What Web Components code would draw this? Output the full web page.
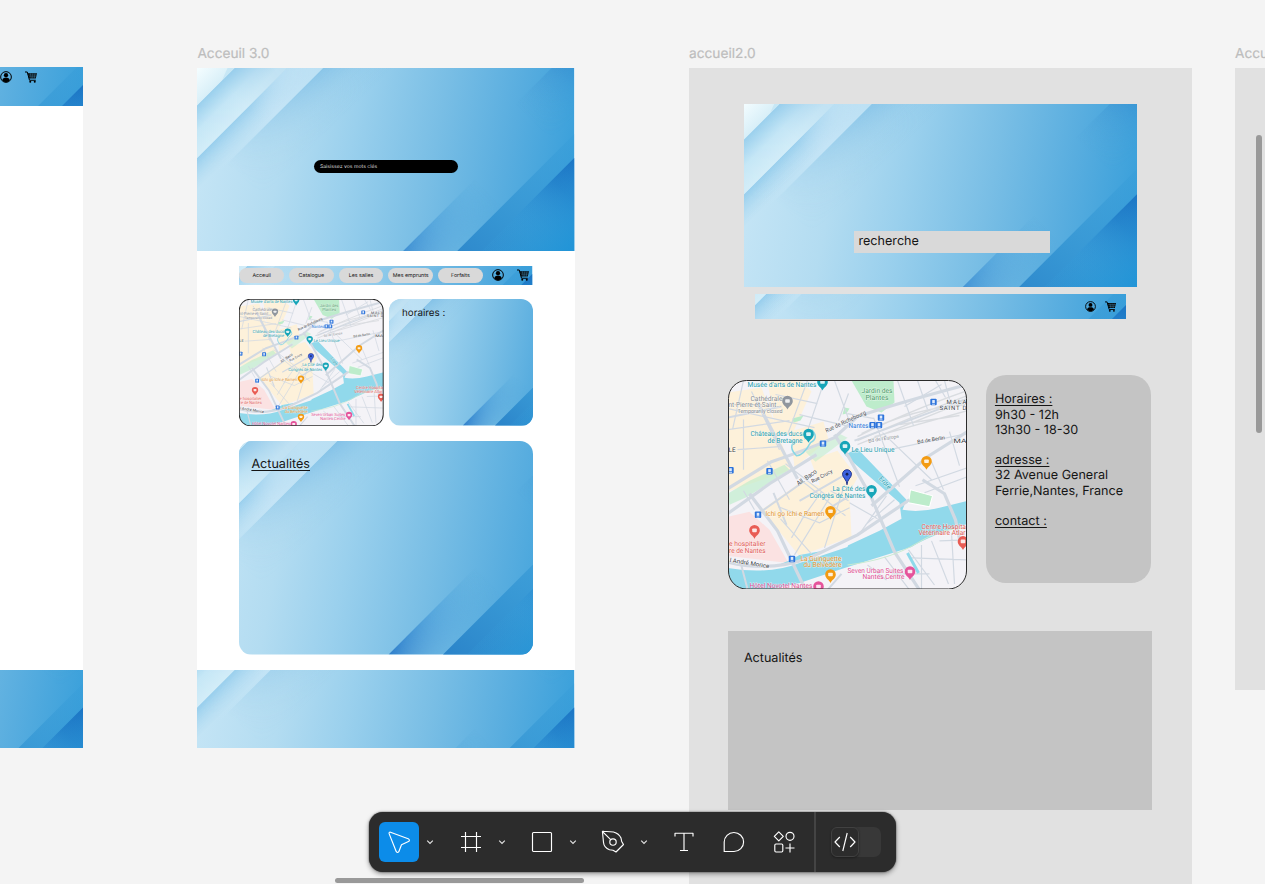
<!DOCTYPE html>
<html lang="fr"><head><meta charset="utf-8"><title>Canvas</title>
<style>html,body{margin:0;height:100%;overflow:hidden}</style></head><body>
<design-canvas></design-canvas>
<script>
const def=(name,html,after)=>customElements.define(name,class extends HTMLElement{
  constructor(){super();const t=document.createElement('template');t.innerHTML=html;
    this.attachShadow({mode:'open'}).append(t.content.cloneNode(true));}
  connectedCallback(){after&&after(this,this.shadowRoot)}
});

/* Diagonal blue artwork, 16:9, cropped like object-fit: cover */
def('blue-art',`<style>:host{display:block;position:relative;overflow:hidden}
.bg{position:absolute;inset:0;width:100%;height:100%;display:block}
.c{position:relative;height:100%;box-sizing:border-box}</style>
<svg class="bg" viewBox="0 0 377 212" preserveAspectRatio="xMidYMid slice">
<defs>
<linearGradient id="base" gradientUnits="userSpaceOnUse" x1="10" y1="90" x2="377" y2="160">
<stop offset="0" stop-color="#c3e4f5"/><stop offset=".2" stop-color="#b3dcf1"/><stop offset=".38" stop-color="#9ad0ed"/><stop offset=".6" stop-color="#79bee5"/><stop offset=".8" stop-color="#58addf"/><stop offset="1" stop-color="#359eda"/></linearGradient>
<linearGradient id="sh" gradientUnits="userSpaceOnUse" x1="70" y1="70" x2="105" y2="105"><stop offset="0" stop-color="#6cb4e2" stop-opacity=".6"/><stop offset=".5" stop-color="#80c0e6" stop-opacity=".22"/><stop offset="1" stop-color="#8cc8ea" stop-opacity="0"/></linearGradient>
<linearGradient id="fadeA" gradientUnits="userSpaceOnUse" x1="140" y1="0" x2="30" y2="110"><stop offset="0" stop-color="#fff"/><stop offset=".4" stop-color="#fff" stop-opacity=".6"/><stop offset="1" stop-color="#fff" stop-opacity="0"/></linearGradient>
<mask id="mA"><rect width="377" height="212" fill="url(#fadeA)"/></mask>
<linearGradient id="s3b" gradientUnits="userSpaceOnUse" x1="140" y1="0" x2="20" y2="120"><stop offset="0" stop-color="#b9dff3"/><stop offset=".5" stop-color="#c4e4f6"/><stop offset="1" stop-color="#c4e5f6" stop-opacity="0"/></linearGradient>
<linearGradient id="l2" gradientUnits="userSpaceOnUse" x1="52" y1="52" x2="68" y2="68"><stop offset="0" stop-color="#8ac7ea" stop-opacity=".8"/><stop offset="1" stop-color="#a6d6f0" stop-opacity="0"/></linearGradient>
<linearGradient id="s2" gradientUnits="userSpaceOnUse" x1="26" y1="26" x2="52" y2="52"><stop offset="0" stop-color="#9bd0ed"/><stop offset=".5" stop-color="#c6e7f6"/><stop offset="1" stop-color="#d3edf8"/></linearGradient>
<linearGradient id="s2m" gradientUnits="userSpaceOnUse" x1="0" y1="104" x2="100" y2="4"><stop offset="0" stop-color="#fff"/><stop offset=".5" stop-color="#fff" stop-opacity=".9"/><stop offset=".8" stop-color="#fff" stop-opacity=".2"/><stop offset="1" stop-color="#fff" stop-opacity="0"/></linearGradient>
<mask id="m2"><rect width="377" height="212" fill="url(#s2m)"/></mask>
<linearGradient id="s2t" gradientUnits="userSpaceOnUse" x1="26" y1="26" x2="48" y2="48"><stop offset="0" stop-color="#93c9ea"/><stop offset="1" stop-color="#bfe1f3"/></linearGradient>
<linearGradient id="s1" gradientUnits="userSpaceOnUse" x1="8" y1="8" x2="26" y2="26"><stop offset="0" stop-color="#f4fdff"/><stop offset="1" stop-color="#d8eff8"/></linearGradient>
<linearGradient id="r1" gradientUnits="userSpaceOnUse" x1="377" y1="0" x2="322" y2="55"><stop offset="0" stop-color="#2a80c8" stop-opacity=".7"/><stop offset=".35" stop-color="#3387cc" stop-opacity=".35"/><stop offset="1" stop-color="#4ba5da" stop-opacity="0"/></linearGradient>
<linearGradient id="r1f" gradientUnits="userSpaceOnUse" x1="184" y1="185" x2="220" y2="221"><stop offset="0" stop-color="#fff"/><stop offset="1" stop-color="#fff" stop-opacity="0"/></linearGradient>
<mask id="mr"><rect width="377" height="212" fill="url(#r1f)"/></mask>
<linearGradient id="r2" gradientUnits="userSpaceOnUse" x1="195" y1="212" x2="280" y2="127"><stop offset="0" stop-color="#2f7fcb"/><stop offset=".45" stop-color="#4499d8" stop-opacity=".65"/><stop offset="1" stop-color="#4ea8dc" stop-opacity="0"/></linearGradient>
<linearGradient id="r2f" gradientUnits="userSpaceOnUse" x1="201" y1="202" x2="229" y2="230"><stop offset="0" stop-color="#fff"/><stop offset="1" stop-color="#fff" stop-opacity=".1"/></linearGradient>
<mask id="mr2"><rect width="377" height="212" fill="url(#r2f)"/></mask>
<linearGradient id="r3" gradientUnits="userSpaceOnUse" x1="245" y1="212" x2="377" y2="80"><stop offset="0" stop-color="#2a83c9"/><stop offset=".4" stop-color="#3293d2" stop-opacity=".9"/><stop offset="1" stop-color="#369cd8" stop-opacity=".3"/></linearGradient>
<linearGradient id="r4" gradientUnits="userSpaceOnUse" x1="377" y1="100" x2="312" y2="175"><stop offset="0" stop-color="#1a72c3"/><stop offset=".35" stop-color="#2482cb"/><stop offset="1" stop-color="#389edb" stop-opacity=".1"/></linearGradient>
<linearGradient id="r5" gradientUnits="userSpaceOnUse" x1="324" y1="154" x2="374" y2="204"><stop offset="0" stop-color="#2f9bd9" stop-opacity="0"/><stop offset="1" stop-color="#1f94d7"/></linearGradient>
</defs>
<rect width="377" height="212" fill="url(#base)"/>
<path d="M140.500 0H240L28 212H0V140.500Z" fill="url(#sh)" mask="url(#mA)"/>
<path d="M104.500 0H140.500L0 140.500V104.500Z" fill="url(#s3b)"/>
<path d="M104.500 0H140.500L0 140.500V104.500Z" fill="url(#l2)" mask="url(#m2)"/>
<path d="M52 0H104.500L0 104.500V52Z" fill="url(#s2t)"/>
<path d="M52 0H104.500L0 104.500V52Z" fill="url(#s2)" mask="url(#m2)"/>
<path d="M0 0H52L0 52Z" fill="url(#s1)"/><path d="M37 0H52L25 27Z" fill="#bfe3f4" opacity=".7"/>
<path d="M369 0H377V90L260 207L165 204Z" fill="url(#r1)" mask="url(#mr)"/>
<path d="M403.500 0L457.500 0L245.500 212H191.500Z" fill="url(#r2)" mask="url(#mr2)"/>
<path d="M377 80.500V212H245.500Z" fill="url(#r3)"/>
<path d="M377 104.500V212H269.500Z" fill="url(#r4)"/>
<path d="M377 104.500V212H269.500Z" fill="url(#r5)"/>
</svg><div class="c"><slot></slot></div>`);

def('user-icon',`<style>:host{display:block;width:12px;height:12px}svg{display:block;width:100%;height:100%}</style>
<svg viewBox="0 0 24 24"><circle cx="12" cy="12" r="10.700" fill="none" stroke="#000" stroke-width="2"/><circle cx="12" cy="8.500" r="4.300"/><path d="M4.500 18.500C5 14.500 8 13.500 12 13.500s7 1 7.500 5C17.500 21 15 22.500 12 22.500S6.500 21 4.500 18.500Z"/></svg>`);
def('cart-icon',`<style>:host{display:block;width:12px;height:12px}svg{display:block;width:100%;height:100%}</style>
<svg viewBox="0 0 24 24"><path d="M0 2h4.500L9 18.500h12.500" fill="none" stroke="#000" stroke-width="2"/><path d="M5 4.500H24L21.500 15H8Z"/><path d="M7 8h16M8 11.600h14M11 5l1.500 10M15.500 5v10M20 5l-1.500 10" stroke="#5aafdf" stroke-width=".7"/><circle cx="10.500" cy="21.500" r="2"/><circle cx="19.500" cy="21.500" r="2"/></svg>`);

def('nav-pill',`<style>:host{display:flex;width:44.500px;height:15.500px;border-radius:8px;background:#d9d9d9;align-items:center;justify-content:center;font-size:5.300px;color:#111;flex:none;white-space:nowrap;box-sizing:border-box;padding-top:1.500px}</style><slot></slot>`);

def('nantes-map',`<style>:host{display:block}svg{display:block;width:100%;height:100%}
text{font-family:Roboto,"Noto Sans",sans-serif;font-size:7px;text-rendering:geometricPrecision;paint-order:stroke;stroke:#fff;stroke-width:1px;stroke-opacity:.6}
.t{fill:#239bad}.g{fill:#858b92}.d{fill:#42464b}.o{fill:#e2932a}.r{fill:#df5a55}.p{fill:#de4b91}.n{fill:#4b9a68}.b{fill:#2674d9}
.road path{fill:none;stroke:#d2d9e2}</style>
<svg viewBox="728.500 380.500 239 209" preserveAspectRatio="none"><defs><clipPath id="c"><rect x="729" y="381" width="238" height="208" rx="18"/></clipPath>
<g id="pin"><path d="M0 7C-1 4-5.300 2.500-5.300-1.500A5.300 5.300 0 0 1 5.300-1.500C5.300 2.500 1 4 0 7Z"/><rect x="-2.300" y="-3.300" width="4.600" height="3.600" rx=".8" fill="#fff" opacity=".85"/></g>
<g id="tram"><rect x="-3.200" y="-3.200" width="6.400" height="6.400" rx="1" fill="#2d74dc"/><rect x="-1.300" y="-2" width="2.600" height="3" fill="#fff" opacity=".85"/><path d="M-1.500 2.200h3" stroke="#fff" stroke-width=".7"/></g></defs>
<g clip-path="url(#c)"><rect x="728" y="380" width="240" height="210" fill="#f4f3f7"/>
<g fill="#fdf1da"><path d="M728 393L762 388L792 470L728 492Z"/><path d="M768 381H801L812 392L792 436L776 432Z"/><path d="M791 432L824 422L829 440L795 468Z"/><path d="M762 510L803 481L850 495L852 537L800 556Z"/><path d="M811 460L838 451L858 478L846 500L822 490Z"/></g>
<path d="M728 517L750 512L770 530L789 563L728 556Z" fill="#fbe2e2"/>
<g fill="#bdeccb"><path d="M852 381H894L895 403L882 413L867 407Z"/><path d="M911 490L933 496L930 507L909 503Z" stroke="#fff"/><path d="M793 419L804 416L801 421L794 423Z"/><path d="M806 452L840 434L848 438L816 462Z" opacity=".55"/><path d="M728 494L750 481L785 465L790 470L748 497L730 505Z" opacity=".65"/><path d="M845 408l5 1-3 5-4 1z"/></g>
<path d="M845 455L858 449L907 500L903 510Q920 513 940 508L968 501V524Q930 536 912 547L845 568L800 583L768 590H728V566Q770 574 800 555L845 547L880 531L902 519L900 503Z" fill="#91d9eb"/>
<path d="M728 563Q770 574 808 557L850 540L848 547L800 563Q770 575 728 568Z" fill="#f4f3f7"/>
<g fill="none" stroke="#d9dce0" stroke-width="1.500"><path d="M858 445Q900 428 968 401M858 441Q910 418 968 396M858 437Q905 413 968 391M862 434Q915 408 968 405M875 437L968 411M900 425L960 416"/></g>
<g class="road"><g stroke-width="1.200"><path d="M728 409L815 428M728 430L790 421M744 381L733 430M744 420V470M738 450L780 447M752 392L780 450M808 381L788 435M825 381L805 440M776 395L818 404M800 415L850 427M835 381L850 422M786 464L830 498L795 555M801 480L846 516M779 507L820 523L850 508M781 519L812 554M807 512L792 538M822 492L802 520M845 485L825 548M831 491L849 501M849 394L839 421M874 418L900 487M883 433L932 480M898 381L914 426M918 381L928 410M905 407L942 385M848 414L875 419M890 450L968 434M916 486L968 468M925 493L968 477M945 381L950 400M768 461L790 500M744 491L755 510M887 496L860 534M895 500L866 525M850 503L878 519M936 381L946 398M932 462L944 490M950 432L960 466"/>
<path d="M909 550L935 585M932 541L949 584M885 557L910 590M912 558L968 560M892 574L930 574M868 565L887 580M940 541L968 540M952 533L955 584M922 545V590"/></g>
<g stroke-width="3.200"><path d="M728 489L772 462Q805 451 835 438L858 417Q900 403 968 385"/><path d="M758 403L798 479"/><path d="M835 435L849 457L872 498L895 552L920 590"/><path d="M872 506L928 457L968 432"/><path d="M728 562Q770 573 812 557L858 535L910 500"/><path d="M728 514L770 484L817 455"/><path d="M750 494L778 531L806 590"/><path d="M923 480L945 494L956 520L960 539"/></g><g stroke-width="2"><path d="M748 589L742 566M855 441L968 399M800 501L851 472M760 513L804 482M774 493L787 525M828 590L842 574M728 418L782 407M852 495L832 507"/></g></g>
<path d="M812 430Q820 438 811 443Q804 456 797 456Q788 447 796 441" fill="none" stroke="#87d6e5" stroke-width="1.500"/>
<path d="M908 553L919 573" stroke="#8ed9ea" stroke-width="3"/>
<path d="M848 565Q890 560 918 543T968 529" fill="none" stroke="#c8ead0"/>
<text class="t" x="748" y="387" textLength="69" lengthAdjust="spacingAndGlyphs">Musée d'arts de Nantes</text>
<text class="g" x="751" y="401" textLength="32" lengthAdjust="spacingAndGlyphs">Cathédrale</text><text class="g" x="729" y="407.500" textLength="53" lengthAdjust="spacingAndGlyphs">nt-Pierre-et-Saint...</text><text class="g" x="738" y="413" textLength="45" lengthAdjust="spacingAndGlyphs" style="font-size:5.800px">Temporarily closed</text>
<text class="t" x="751" y="436.500" textLength="52" lengthAdjust="spacingAndGlyphs">Château des ducs</text><text class="t" x="768" y="443" textLength="35" lengthAdjust="spacingAndGlyphs">de Bretagne</text>
<text class="n" x="862" y="393.500" textLength="31" lengthAdjust="spacingAndGlyphs">Jardin des</text><text class="n" x="866" y="400" textLength="23" lengthAdjust="spacingAndGlyphs">Plantes</text>
<text class="d" x="947" y="404.500" textLength="20" style="font-size:6px">MALA</text><text class="d" x="940" y="410.500" textLength="27" style="font-size:6px">SAINT D</text><text class="d" x="954" y="443.500" textLength="13" lengthAdjust="spacingAndGlyphs" style="font-size:6px">MA</text><text class="d" x="729" y="452" style="font-size:6.500px">LE</text>
<text class="d" x="827" y="433" textLength="44" lengthAdjust="spacingAndGlyphs" transform="rotate(-25 827 433)" style="font-size:6px">Rue de Richebourg</text>
<text class="b" x="849" y="428.500" textLength="20" lengthAdjust="spacingAndGlyphs">Nantes</text><text class="t" x="852" y="452" textLength="43" lengthAdjust="spacingAndGlyphs">Le Lieu Unique</text>
<text class="g" x="869" y="443" textLength="31" lengthAdjust="spacingAndGlyphs" transform="rotate(-9 869 443)" style="font-size:5px">Bd de l'Europe</text><text class="d" x="918" y="444" textLength="28" lengthAdjust="spacingAndGlyphs" transform="rotate(-9 918 444)" style="font-size:5.300px">Bd de Berlin</text>
<text class="d" x="799" y="486" textLength="23" lengthAdjust="spacingAndGlyphs" transform="rotate(-35 799 486)" style="font-size:6.500px">All. Baco</text><text class="d" x="813" y="483.500" textLength="23" lengthAdjust="spacingAndGlyphs" transform="rotate(-28 813 483.500)" style="font-size:5.500px">Rue Crucy</text>
<text class="t" x="879" y="479" transform="rotate(48 879 479)" textLength="15" lengthAdjust="spacingAndGlyphs" style="font-size:6.500px">Erdre</text>
<text class="t" x="833" y="491.500" textLength="33" lengthAdjust="spacingAndGlyphs">La Cité des</text><text class="t" x="810" y="498.500" textLength="56" lengthAdjust="spacingAndGlyphs">Congrès de Nantes</text>
<text class="o" x="766" y="516" textLength="59" lengthAdjust="spacingAndGlyphs">Ichi go Ichi e Ramen</text>
<text class="r" x="729.500" y="546.500" textLength="36.500" lengthAdjust="spacingAndGlyphs">e hospitalier</text><text class="r" x="729.500" y="553" textLength="36.500" lengthAdjust="spacingAndGlyphs">re de Nantes</text>
<text class="d" x="730" y="562" textLength="40" lengthAdjust="spacingAndGlyphs" transform="rotate(9 730 562)" style="font-size:6px">l André Morice</text>
<text class="o" x="801" y="561.500" textLength="41" lengthAdjust="spacingAndGlyphs">La Guinguette</text><text class="o" x="804" y="567.500" textLength="38" lengthAdjust="spacingAndGlyphs">du Belvédère</text>
<text class="p" x="848" y="573.500" textLength="56" lengthAdjust="spacingAndGlyphs">Seven Urban Suites</text><text class="p" x="863" y="579.500" textLength="42" lengthAdjust="spacingAndGlyphs">Nantes Centre</text><text class="p" x="750" y="588.500" textLength="63" lengthAdjust="spacingAndGlyphs">Hôtel Novotel Nantes</text>
<text class="r" x="922" y="529" textLength="44.500" lengthAdjust="spacingAndGlyphs">Centre Hospita</text><text class="r" x="919" y="535.500" textLength="47" lengthAdjust="spacingAndGlyphs">Vétérinaire Atlar</text>
<use href="#pin" x="823" y="384" fill="#17a5b8"/><use href="#pin" x="788" y="403" fill="#90969e"/><use href="#pin" x="809" y="436" fill="#17a5b8"/><use href="#pin" x="845.500" y="448" fill="#17a5b8"/><use href="#pin" x="872" y="492" fill="#17a5b8"/><use href="#pin" x="927" y="463" fill="#f39b12"/><use href="#pin" x="831" y="513" fill="#f39b12"/><use href="#pin" x="831" y="576" fill="#f39b12"/><use href="#pin" x="755" y="532" fill="#e95c54"/><use href="#pin" x="963.500" y="543" fill="#e95c54"/><use href="#pin" x="910.500" y="573" fill="#e5549b"/><use href="#pin" x="819" y="588" fill="#e5549b"/>
<g transform="translate(847.500 475)"><path d="M0 10C0 5-4.500 3-4.500-.500A4.500 4.500 0 0 1 4.500-.500C4.500 3 0 5 0 10Z" fill="#3d62e0" stroke="#1d2f86" stroke-width=".9"/><circle cy="-.5" r="1.400" fill="#162257"/></g>
<use href="#tram" x="823.500" y="444"/><use href="#tram" x="770" y="471.500"/><use href="#tram" x="731" y="470.500"/><use href="#tram" x="934" y="402.500"/><use href="#tram" x="881.500" y="418"/><use href="#tram" x="873" y="425.500"/><use href="#tram" x="879.500" y="425.500"/><use href="#tram" x="758.500" y="515"/><use href="#tram" x="792.500" y="559"/>
</g><rect x="729" y="381" width="238" height="208" rx="18" fill="none" stroke="#2b2b2b" vector-effect="non-scaling-stroke"/></svg>`);

/* Free-canvas frame: a name above and a slotted page */
def('canvas-frame',`<style>:host{position:absolute;display:block}
.n{position:absolute;left:0;top:-24px;font-size:13.700px;line-height:18px;color:#bdbdbd;white-space:nowrap;-webkit-text-stroke:.2px #bdbdbd;padding-top:.5px}
.b{height:100%;box-sizing:border-box;display:flow-root}</style><div class="n"></div><div class="b"><slot></slot></div>`,
(h,r)=>{r.querySelector('.n').textContent=h.getAttribute('name')||''});

def('page-left',`<style>:host{display:flex;flex-direction:column;justify-content:space-between;height:100%;background:#fff}
.h{height:39px}.f{height:78px}.row{display:flex;gap:13px;justify-content:flex-end;padding:4px 46px 0 0}</style>
<blue-art class="h"><div class="row"><user-icon></user-icon><cart-icon></cart-icon></div></blue-art><blue-art class="f"></blue-art>`);

def('page-home',`<style>:host{display:flex;flex-direction:column;height:100%;background:#fff;color:#151515}
.hero{height:183px}.search{margin:91.500px 0 0 116.500px;width:144.500px;height:13.500px;border-radius:7px;background:#000;color:#ddd;font-size:5.150px;line-height:12.500px;box-sizing:border-box;padding:1px 0 0 6px}
main{padding:15px 42px 0;display:flex;flex-direction:column;flex:1}
.nav{height:18.500px}.row{display:flex;align-items:center;gap:5.200px;height:18.500px}.row user-icon{margin-left:4px}.row cart-icon{margin-left:8px}
.two{display:grid;grid-template-columns:144.500px 144px;justify-content:space-between;margin-top:14.500px;height:127px}
nantes-map{height:127px}.hor{border-radius:12px;height:126.500px}.hor p{margin:0;padding:8px 13.500px;font-size:9.800px;line-height:14px}
.act{border-radius:13px;height:213.500px;margin-top:15px}.act p{margin:0;padding:15px 12px;font-size:12.600px;line-height:18px;text-decoration:underline;text-underline-offset:2px}
.foot{height:78px}</style>
<blue-art class="hero"><div style="display:flow-root"><div class="search">Saisissez vos mots clés</div></div></blue-art>
<main><blue-art class="nav"><div class="row"><nav-pill>Acceuil</nav-pill><nav-pill>Catalogue</nav-pill><nav-pill>Les salles</nav-pill><nav-pill>Mes emprunts</nav-pill><nav-pill>Forfaits</nav-pill><user-icon></user-icon><cart-icon></cart-icon></div></blue-art>
<div class="two"><nantes-map></nantes-map><blue-art class="hor"><p>horaires :</p></blue-art></div>
<blue-art class="act"><p>Actualités</p></blue-art></main>
<blue-art class="foot"></blue-art>`);

def('page-wire',`<style>:host{display:flow-root;height:100%;background:#e1e1e1;color:#151515;font-size:12.600px}
.hero{margin:36px 0 0 55px;width:393px;height:183.400px}.in{display:flow-root}.search{margin:127px 0 0 110px;width:196px;height:21.500px;background:#d9d9d9;line-height:20.500px;padding:1px 0 0 4.500px;box-sizing:border-box}
.nav{margin:7px 0 0 65.600px;width:371px;height:25px}.row{display:flex;justify-content:flex-end;align-items:center;height:25px;gap:9px;padding-right:10px}.row>*{width:11px;height:11px}
.two{display:flex;margin:55.600px 0 0 39.600px;gap:19px;align-items:flex-start}nantes-map{width:239px;height:209.500px;margin:5px 0 0 -.2px}
.info{width:165px;height:208.500px;border-radius:20px;background:#c4c4c4;box-sizing:border-box;padding:17.500px 8.500px;line-height:15.200px;white-space:nowrap}u{text-underline-offset:2px}
.info div{min-height:15.200px}.act{margin:41.500px 0 0 39.400px;width:423.400px;height:179px;background:#c4c4c4;box-sizing:border-box;padding:20px 15.500px;line-height:16px}</style>
<blue-art class="hero"><div class="in"><div class="search">recherche</div></div></blue-art>
<blue-art class="nav"><div class="row"><user-icon></user-icon><cart-icon></cart-icon></div></blue-art>
<div class="two"><nantes-map></nantes-map><div class="info"><div><u>Horaires :</u></div><div>9h30 - 12h</div><div>13h30 - 18-30</div><div></div><div><u>adresse :</u></div><div>32 Avenue General</div><div>Ferrie,Nantes, France</div><div></div><div><u>contact :</u></div></div></div>
<div class="act">Actualités</div>`);

def('tool-chevron',`<style>:host{display:block;width:8px;height:8px}svg{display:block}</style><svg width="8" height="8" viewBox="0 0 8 8"><path d="M1.200 2.700L4 5.500 6.800 2.700" fill="none" stroke="#e6e6e6" stroke-width="1.100"/></svg>`);
def('tool-button',`<style>:host{display:flex;width:40px;height:40px;border-radius:6px;align-items:center;justify-content:center;flex:none}:host([active]){background:#0c8ce9}</style><slot></slot>`);
def('tool-bar',`<style>:host{position:absolute;left:369px;top:812px;width:527px;height:60px;border-radius:14px;background:#2c2c2c;box-shadow:0 2px 5px rgba(0,0,0,.4),0 0 1.500px rgba(0,0,0,.8);display:flex;align-items:center;box-sizing:border-box;padding-left:10px}
svg{display:block;fill:none;stroke:#fff;stroke-width:1.150;stroke-linejoin:round}tool-chevron{margin:0 16.500px 0 6.500px}tool-button[active]+tool-chevron{margin:0 17px 0 7px}tool-button+tool-button{margin-left:10px}.sep{width:1.500px;height:60px;background:#444;margin-left:10px}
.sw{display:flex;width:50px;height:30px;border-radius:7px;background:#383838;margin-left:15.500px}.kn{display:flex;align-items:center;justify-content:center;width:26px;height:28px;border-radius:6px;background:#2c2c2c;border:1px solid #414141;box-shadow:0 1px 2px #1e1e1e}</style>
<tool-button active><svg width="24" height="24" viewBox="0 0 24 24"><path d="M2.200 3.900Q1.600 2 3.500 2.200L21.200 8.800Q23 9.700 22 11.300L14.500 14.700L11.800 21.700Q10.500 23.200 9.300 21.700Z"/></svg></tool-button><tool-chevron></tool-chevron>
<tool-button><svg width="22" height="22" viewBox="0 0 22 22"><path d="M5.500 1v20M16.500 1v20M1 5.500h20M1 16.500h20"/></svg></tool-button><tool-chevron></tool-chevron>
<tool-button><svg width="22" height="22" viewBox="0 0 22 22"><rect x="1.500" y="1.500" width="19" height="19" rx="1"/></svg></tool-button><tool-chevron></tool-chevron>
<tool-button><svg width="24" height="24" viewBox="0 0 24 24"><path d="M1.500 2.200Q1 1 2.500 1.200L12.500 2Q18 3.500 20 8L20.700 11.500L22.500 14.500L15 22L12 20.200L8.500 19.800Q3 17.500 2.500 12.500ZM1.800 1.800L9.700 9.700"/><circle cx="12" cy="12" r="3.200"/></svg></tool-button><tool-chevron></tool-chevron>
<tool-button><svg width="22" height="22" viewBox="0 0 22 22"><path d="M2 5.500V2.200H20V5.500M11 2.200V19.500M7 19.500h8"/></svg></tool-button>
<tool-button><svg width="22" height="22" viewBox="0 0 22 22"><path d="M1.200 20.500V11A9.700 9.500 0 1 1 11 20.500Z"/></svg></tool-button>
<tool-button><svg width="22" height="22" viewBox="0 0 22 22"><path d="M5.800.800L10.300 5.300L5.800 9.800L1.300 5.300ZM17 12.500v9M12.500 17h9"/><circle cx="17" cy="5.300" r="4"/><rect x="1.800" y="13" width="8" height="8" rx="1.200"/></svg></tool-button>
<div class="sep"></div><div class="sw"><div class="kn"><svg width="22" height="20" viewBox="0 0 22 20"><path d="M5.800 5L1 10L5.800 15M16.200 5L21 10L16.200 15M13.200 1L8.800 19"/></svg></div></div>`);

def('design-canvas',`<style>:host{display:block;position:relative;width:1265px;height:884px;overflow:hidden;background:#f4f4f4;font-family:Inter,"Liberation Sans",sans-serif;text-rendering:geometricPrecision}
.s{position:absolute;background:#999;border-radius:3px}</style>
<canvas-frame style="left:-294px;top:67px;width:377px;height:681px"><page-left></page-left></canvas-frame>
<canvas-frame name="Acceuil 3.0" style="left:197.400px;top:68px;width:377.200px;height:680px"><page-home></page-home></canvas-frame>
<canvas-frame name="accueil2.0" style="left:689px;top:68px;width:503px;height:820px"><page-wire></page-wire></canvas-frame>
<canvas-frame name="Accueil" style="left:1235px;top:68px;width:300px;height:622px;background:#e1e1e1"></canvas-frame>
<div class="s" style="left:1256px;top:135px;width:5.500px;height:298px"></div><div class="s" style="left:335px;top:877.500px;width:249px;height:5px"></div>
<tool-bar></tool-bar>`);
</script></body></html>
